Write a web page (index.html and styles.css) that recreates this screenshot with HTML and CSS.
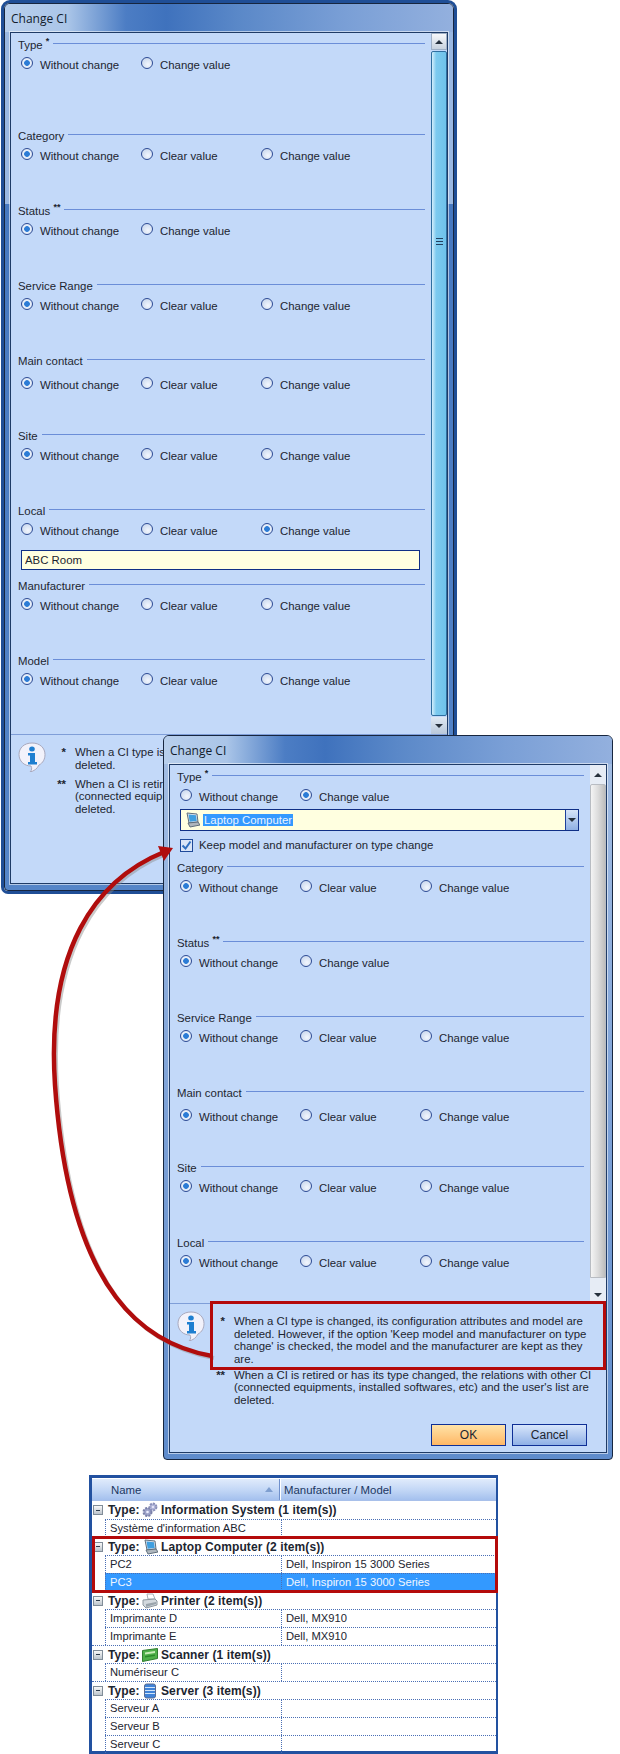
FILE: index.html
```html
<!DOCTYPE html>
<html lang="en">
<head>
  <meta charset="UTF-8" />
  <meta name="viewport" content="width=device-width, initial-scale=1.0" />
  <title>Change CI</title>
  <link rel="stylesheet" href="styles.css">
</head>
<body>
  <svg class="defs" width="0" height="0">
    <symbol id="ico-info" viewBox="0 0 28 30">
      <path d="M14 1C6 1 1 6 1 12.5S6 24 13 24c1 2 1 4-1 6 4-1 7-3 9-7 4-2 6-6 6-10.500C27 6 22 1 14 1z" fill="#f2f2fb" stroke="#a9a9bd"/>
      <ellipse cx="14" cy="7" rx="2.800" ry="2.500" fill="#1f7fd0"/>
      <path d="M10 11h7v9h2v2.500h-9V20h2v-6.500h-2z" fill="#1f7fd0"/>
    </symbol>
    <symbol id="ico-laptop" viewBox="0 0 16 16">
      <path d="M3 1l10 1 1 8-9 1z" fill="#dfe6ee" stroke="#5f6e7c"/>
      <path d="M4.500 2.500l7.500.8.700 5.700-7 .8z" fill="#3f9fe0"/>
      <path d="M4 11l10-1 2 3-10 2z" fill="#aeb6bd" stroke="#5f6e7c"/>
    </symbol>
    <symbol id="ico-gears" viewBox="0 0 16 16">
      <circle cx="5.500" cy="10" r="4" fill="#9da3c9" stroke="#7a80a8" stroke-width="2" stroke-dasharray="2 1.200"/>
      <circle cx="5.500" cy="10" r="1.300" fill="#eef"/>
      <circle cx="11" cy="5" r="3.400" fill="#b2b6d8" stroke="#8a8fb8" stroke-width="2" stroke-dasharray="2 1.100"/>
      <circle cx="11" cy="5" r="1.100" fill="#eef"/>
    </symbol>
    <symbol id="ico-printer" viewBox="0 0 16 16">
      <path d="M5 1l6 0 2 5H6z" fill="#fff" stroke="#a8b0b8"/>
      <path d="M1 7l12-1 2 2v4l-11 3-3-3z" fill="#d3d9de" stroke="#8d979f"/>
      <path d="M4 11l10-2v2l-10 3z" fill="#9aa4ac"/>
    </symbol>
    <symbol id="ico-scanner" viewBox="0 0 16 16">
      <path d="M.5 3.500L15.500 1.500v10l-15 3z" fill="#4fb04a" stroke="#2f7d2f"/>
      <path d="M3 5.500l10-1.500v2L3 7.500z" fill="#c8ecb8"/>
      <path d="M3 9l10-1.500v1.500L3 10.500z" fill="#2c8a2c"/>
    </symbol>
    <symbol id="ico-server" viewBox="0 0 16 16">
      <rect x="2.500" y="1" width="11" height="14" rx="2" fill="#3f82d8" stroke="#5a6a90"/>
      <path d="M3 4.500h10M3 7.500h10M3 10.500h10" stroke="#cfe4fa"/>
    </symbol>
  </svg>

  <section class="win win-first">
    <div class="title">Change CI</div>
    <div class="content">
      <div class="pane">
        <div class="form">
          <div class="sect sect-tall">
            <div class="sect-head"><span>Type <sup>*</sup></span></div>
            <div class="opts">
              <label><input type="radio" name="a1" checked>Without change</label>
              <label><input type="radio" name="a1">Change value</label>
            </div>
          </div>
          <div class="sect">
            <div class="sect-head"><span>Category</span></div>
            <div class="opts">
              <label><input type="radio" name="a2" checked>Without change</label>
              <label><input type="radio" name="a2">Clear value</label>
              <label><input type="radio" name="a2">Change value</label>
            </div>
          </div>
          <div class="sect">
            <div class="sect-head"><span>Status <sup>**</sup></span></div>
            <div class="opts">
              <label><input type="radio" name="a3" checked>Without change</label>
              <label><input type="radio" name="a3">Change value</label>
            </div>
          </div>
          <div class="sect">
            <div class="sect-head"><span>Service Range</span></div>
            <div class="opts">
              <label><input type="radio" name="a4" checked>Without change</label>
              <label><input type="radio" name="a4">Clear value</label>
              <label><input type="radio" name="a4">Change value</label>
            </div>
          </div>
          <div class="sect">
            <div class="sect-head"><span>Main contact</span></div>
            <div class="opts opts-low">
              <label><input type="radio" name="a5" checked>Without change</label>
              <label><input type="radio" name="a5">Clear value</label>
              <label><input type="radio" name="a5">Change value</label>
            </div>
          </div>
          <div class="sect">
            <div class="sect-head"><span>Site</span></div>
            <div class="opts">
              <label><input type="radio" name="a6" checked>Without change</label>
              <label><input type="radio" name="a6">Clear value</label>
              <label><input type="radio" name="a6">Change value</label>
            </div>
          </div>
          <div class="sect">
            <div class="sect-head"><span>Local</span></div>
            <div class="opts">
              <label><input type="radio" name="a7">Without change</label>
              <label><input type="radio" name="a7">Clear value</label>
              <label><input type="radio" name="a7" checked>Change value</label>
            </div>
            <input class="text-field" type="text" value="ABC Room">
          </div>
          <div class="sect">
            <div class="sect-head"><span>Manufacturer</span></div>
            <div class="opts">
              <label><input type="radio" name="a8" checked>Without change</label>
              <label><input type="radio" name="a8">Clear value</label>
              <label><input type="radio" name="a8">Change value</label>
            </div>
          </div>
          <div class="sect">
            <div class="sect-head"><span>Model</span></div>
            <div class="opts">
              <label><input type="radio" name="a9" checked>Without change</label>
              <label><input type="radio" name="a9">Clear value</label>
              <label><input type="radio" name="a9">Change value</label>
            </div>
          </div>
        </div>
        <div class="scroll scroll-blue">
          <div class="scroll-btn"><span class="arrow-up"></span></div>
          <div class="thumb"><span class="grip"></span></div>
          <div class="scroll-btn"><span class="arrow-down"></span></div>
        </div>
      </div>
      <div class="info">
        <div class="info-top">
          <svg class="info-ico"><use href="#ico-info"/></svg>
          <div class="notes">
            <div class="note"><span class="mark">*</span><p>When a CI type is changed, its configuration attributes and model are deleted.</p></div>
            <div class="note"><span class="mark">**</span><p>When a CI is retired or has its type changed, the relations with other CI (connected equipments, installed softwares, etc) and the user's list are deleted.</p></div>
          </div>
        </div>
      </div>
    </div>
  </section>

  <section class="win win-second">
    <div class="title">Change CI</div>
    <div class="content">
      <div class="pane">
        <div class="form">
          <div class="sect sect-tall">
            <div class="sect-head"><span>Type <sup>*</sup></span></div>
            <div class="opts">
              <label><input type="radio" name="b1">Without change</label>
              <label><input type="radio" name="b1" checked>Change value</label>
            </div>
            <div class="combo">
              <svg class="ico"><use href="#ico-laptop"/></svg>
              <span class="combo-value">Laptop Computer</span>
              <span class="combo-btn"><span class="arrow-down"></span></span>
            </div>
            <label class="check-row">
              <span class="check"><svg width="11" height="11" viewBox="0 0 11 11"><path d="M1.500 5.500l3 3 5-7" fill="none" stroke="#2f6fc0" stroke-width="2"/></svg></span>
              Keep model and manufacturer on type change
            </label>
          </div>
          <div class="sect">
            <div class="sect-head"><span>Category</span></div>
            <div class="opts">
              <label><input type="radio" name="b2" checked>Without change</label>
              <label><input type="radio" name="b2">Clear value</label>
              <label><input type="radio" name="b2">Change value</label>
            </div>
          </div>
          <div class="sect">
            <div class="sect-head"><span>Status <sup>**</sup></span></div>
            <div class="opts">
              <label><input type="radio" name="b3" checked>Without change</label>
              <label><input type="radio" name="b3">Change value</label>
            </div>
          </div>
          <div class="sect">
            <div class="sect-head"><span>Service Range</span></div>
            <div class="opts">
              <label><input type="radio" name="b4" checked>Without change</label>
              <label><input type="radio" name="b4">Clear value</label>
              <label><input type="radio" name="b4">Change value</label>
            </div>
          </div>
          <div class="sect">
            <div class="sect-head"><span>Main contact</span></div>
            <div class="opts opts-low">
              <label><input type="radio" name="b5" checked>Without change</label>
              <label><input type="radio" name="b5">Clear value</label>
              <label><input type="radio" name="b5">Change value</label>
            </div>
          </div>
          <div class="sect">
            <div class="sect-head"><span>Site</span></div>
            <div class="opts">
              <label><input type="radio" name="b6" checked>Without change</label>
              <label><input type="radio" name="b6">Clear value</label>
              <label><input type="radio" name="b6">Change value</label>
            </div>
          </div>
          <div class="sect">
            <div class="sect-head"><span>Local</span></div>
            <div class="opts">
              <label><input type="radio" name="b7" checked>Without change</label>
              <label><input type="radio" name="b7">Clear value</label>
              <label><input type="radio" name="b7">Change value</label>
            </div>
          </div>
        </div>
        <div class="scroll scroll-grey">
          <div class="scroll-btn"><span class="arrow-up"></span></div>
          <div class="thumb"></div>
          <div class="scroll-btn"><span class="arrow-down"></span></div>
        </div>
      </div>
      <div class="info">
        <div class="info-top">
          <svg class="info-ico"><use href="#ico-info"/></svg>
          <div class="notes">
            <div class="note"><span class="mark">*</span><p>When a CI type is changed, its configuration attributes and model are deleted. However, if the option 'Keep model and manufacturer on type change' is checked, the model and the manufacturer are kept as they are.</p></div>
            <div class="note"><span class="mark">**</span><p>When a CI is retired or has its type changed, the relations with other CI (connected equipments, installed softwares, etc) and the user's list are deleted.</p></div>
          </div>
        </div>
        <div class="buttons">
          <button class="btn btn-ok">OK</button>
          <button class="btn">Cancel</button>
        </div>
      </div>
    </div>
  </section>

  <section class="list">
    <div class="list-head">
      <div class="col-name">Name<span class="sort"></span></div>
      <div class="col-model">Manufacturer / Model</div>
    </div>
    <div class="group"><span class="toggle"></span><b class="type">Type:</b><svg class="ico"><use href="#ico-gears"/></svg><b>Information System (1 item(s))</b></div>
    <div class="row"><span>Système d'information ABC</span><span></span></div>
    <div class="group"><span class="toggle"></span><b class="type">Type:</b><svg class="ico"><use href="#ico-laptop"/></svg><b>Laptop Computer (2 item(s))</b></div>
    <div class="row"><span>PC2</span><span>Dell, Inspiron 15 3000 Series</span></div>
    <div class="row row-sel"><span>PC3</span><span>Dell, Inspiron 15 3000 Series</span></div>
    <div class="group"><span class="toggle"></span><b class="type">Type:</b><svg class="ico"><use href="#ico-printer"/></svg><b>Printer (2 item(s))</b></div>
    <div class="row"><span>Imprimante D</span><span>Dell, MX910</span></div>
    <div class="row"><span>Imprimante E</span><span>Dell, MX910</span></div>
    <div class="group"><span class="toggle"></span><b class="type">Type:</b><svg class="ico"><use href="#ico-scanner"/></svg><b>Scanner (1 item(s))</b></div>
    <div class="row"><span>Numériseur C</span><span></span></div>
    <div class="group"><span class="toggle"></span><b class="type">Type:</b><svg class="ico"><use href="#ico-server"/></svg><b>Server (3 item(s))</b></div>
    <div class="row"><span>Serveur A</span><span></span></div>
    <div class="row"><span>Serveur B</span><span></span></div>
    <div class="row"><span>Serveur C</span><span></span></div>
  </section>

  <!-- callout curve between the option and the note, drawn over both windows -->
  <svg class="callout" width="620" height="1754" viewBox="0 0 620 1754">
    <path d="M212 1356C150 1345 70 1300 55 1085C46 950 95 880 164 852" fill="none" stroke="#8a8a8a" stroke-width="4" opacity=".45" transform="translate(2 2)"/>
    <path d="M212 1356C150 1345 70 1300 55 1085C46 950 95 880 164 852" fill="none" stroke="#b00d0d" stroke-width="4.500"/>
    <path d="M173 848L158 846L164 861z" fill="#b00d0d"/>
  </svg>
  <div class="red-box red-note"></div>
  <div class="red-box red-rows"></div>
</body>
</html>
```

FILE: styles.css
```css
* {
  box-sizing: border-box;
}
body {
  margin: 0;
  width: 620px;
  height: 1754px;
  position: relative;
  overflow: hidden;
  background: #fff;
  font-family: 'Liberation Sans', Arial, sans-serif;
  font-size: 11.4px;
  color: #1c2530;
}
.defs {
  position: absolute;
}

/* windows */
.win {
  position: absolute;
  width: 450px;
  display: flex;
  flex-direction: column;
  border: 1px solid #17263f;
  border-radius: 6px 6px 4px 4px;
}
.win-first {
  left: 4px;
  top: 3px;
  height: 888px;
  background: linear-gradient(180deg, #9ab8e2 0, #9ab8e2 200px, #4678c0 200px, #5585c8 100%);
  box-shadow: 0 0 0 3px #1f4e96;
}
.win-second {
  left: 163px;
  top: 735px;
  height: 725px;
  background: linear-gradient(180deg, #a5bfe4 0, #7fa3d8 50%, #5f8ccc 100%);
}
.title {
  height: 28px;
  flex: none;
  padding: 6px 0 0 6px;
  border-radius: 5px 5px 0 0;
  font-family: 'Open Sans', sans-serif;
  font-size: 12px;
  line-height: 17px;
  color: #111c2c;
  background: linear-gradient(90deg, #b8cfec 0, #aac5e8 14%, #4c7dc4 27%, #3f72bd 36%, #5a88c8 52%, #7a9fd6 76%, #93b0de 100%);
}
.content {
  flex: 1;
  min-height: 0;
  margin: 0 5px 6px;
  display: flex;
  flex-direction: column;
  border: 1px solid #1f3b66;
  outline: 1px solid rgba(255, 255, 255, .55);
  background: #c3d9f9;
}
.pane {
  flex: 1;
  min-height: 0;
  display: flex;
}
.form {
  flex: 1;
  min-width: 0;
  overflow: hidden;
  padding: 4px 6px 0 7px;
}

/* form sections */
.sect {
  height: 75px;
}
.sect-tall {
  height: 91px;
}
.sect-head {
  height: 14px;
  display: flex;
  align-items: center;
  gap: 4px;
  line-height: 14px;
}
.sect-head span {
  padding-top: 2px;
}
.sect-head::after {
  content: "";
  flex: 1;
  height: 1px;
  margin-top: -1px;
  background: #6b8ed8;
}
sup {
  font-size: 9px;
  line-height: 0;
  font-weight: bold;
}
.opts {
  height: 14px;
  margin-top: 7px;
  padding-left: 3px;
  display: grid;
  grid-template-columns: 120px 120px 120px;
}
.opts-low {
  margin-top: 11px;
}
.opts label {
  display: flex;
  align-items: center;
  gap: 7px;
  line-height: 14px;
}
input[type=radio] {
  appearance: none;
  width: 12px;
  height: 12px;
  margin: -4px 0 0;
  flex: none;
  border: 1px solid #2d4b94;
  border-radius: 50%;
  background: radial-gradient(circle at 60% 65%, #f2f6fd 0, #cfdcf0 70%, #aebcd6 100%);
}
input[type=radio]:checked {
  background: radial-gradient(circle, #2c7cd6 0, #2c7cd6 2.5px, #eaf1fb 3.2px, #cfdcf0 100%);
}
.text-field {
  display: block;
  width: 399px;
  height: 20px;
  margin: 12px 0 0 3px;
  padding: 0 3px;
  border: 1px solid #0f2f86;
  background: #ffffe0;
  font: inherit;
  color: #1c2530;
  outline: none;
}
.combo {
  width: 399px;
  height: 22px;
  margin: 5px 0 0 3px;
  display: flex;
  align-items: center;
  padding-left: 3px;
  border: 1px solid #0f2f86;
  background: #ffffe0;
}
.combo-value {
  margin-left: 3px;
  padding: 0 1px;
  line-height: 12px;
  background: #3399ff;
  color: #eaf3ff;
}
.combo-btn {
  margin-left: auto;
  width: 13px;
  height: 100%;
  display: flex;
  align-items: center;
  justify-content: center;
  border-left: 1px solid #1d3f9a;
  background: linear-gradient(180deg, #d6e4f8, #8fb0e4);
}
.check-row {
  height: 14px;
  margin: 7px 0 0 3px;
  display: flex;
  align-items: center;
  gap: 6px;
}
.check {
  width: 13px;
  height: 13px;
  display: flex;
  align-items: center;
  justify-content: center;
  border: 1px solid #1f4a9a;
  background: #d9e5f7;
}
.ico {
  width: 16px;
  height: 16px;
  flex: none;
}

/* scrollbars */
.scroll {
  width: 16px;
  flex: none;
  display: flex;
  flex-direction: column;
}
.scroll-btn {
  height: 17px;
  flex: none;
  display: flex;
  align-items: center;
  justify-content: center;
}
.arrow-up,
.arrow-down {
  width: 0;
  height: 0;
  border-left: 4px solid transparent;
  border-right: 4px solid transparent;
}
.arrow-up {
  border-bottom: 4px solid #26303c;
}
.arrow-down {
  border-top: 4px solid #26303c;
}
.thumb {
  flex: 1;
  display: flex;
  align-items: center;
  justify-content: center;
}
.scroll-blue .scroll-btn:first-child {
  border: 1px solid #9fb0c6;
  background: linear-gradient(180deg, #f6f8fb, #c8d2de);
}
.scroll-blue .thumb {
  margin: 1px 0;
  border: 1px solid #2f6fa0;
  border-radius: 2px;
  align-items: flex-start;
  padding-top: 186px;
  background: linear-gradient(90deg, #d4eefb 0, #7ccaef 30%, #6fc2ea 100%);
}
.scroll-blue .scroll-btn:last-child {
  background: linear-gradient(180deg, #dfe8f3, #b9c8da);
}
.grip {
  width: 7px;
  height: 7px;
  border-top: 1px solid #24405f;
  border-bottom: 1px solid #24405f;
  background: linear-gradient(180deg, transparent 2px, #24405f 2px, #24405f 3px, transparent 3px);
}
.scroll-grey {
  background: #e6ecf5;
}
.scroll-grey .scroll-btn:first-child {
  height: 19px;
}
.scroll-grey .thumb {
  margin-bottom: 8px;
  border-radius: 2px 2px 0 0;
  border: 1px solid #b8bcc2;
  background: linear-gradient(90deg, #f4f4f4 0, #dcdcdc 50%, #bdbdbd 100%);
}

/* info panel */
.info {
  height: 149px;
  flex: none;
  display: flex;
  flex-direction: column;
  padding-top: 11px;
  border-top: 1px solid #7f9ed8;
}
.info-top {
  display: flex;
  padding-left: 7px;
}
.info-ico {
  width: 28px;
  height: 30px;
  margin: -4px 5px 0 0;
  flex: none;
}
.notes {
  width: 384px;
  flex: none;
}
.note {
  display: flex;
  margin-bottom: 3.5px;
  line-height: 12.5px;
}
.win-first .note {
  margin-bottom: 6.5px;
}
.note p {
  margin: 0 0 0 9px;
  flex: 1;
}
.mark {
  width: 15px;
  flex: none;
  text-align: right;
  font-weight: bold;
}
.buttons {
  margin-top: auto;
  padding: 0 19px 6px 0;
  display: flex;
  justify-content: flex-end;
  gap: 6px;
}
.btn {
  width: 75px;
  height: 22px;
  padding: 0;
  border: 1px solid #0f2f96;
  background: linear-gradient(180deg, #d8e6fb, #8fb0e6);
  font: inherit;
  font-size: 12px;
  color: #1c2530;
}
.btn-ok {
  background: linear-gradient(180deg, #ffe3a8, #ffb765);
}

/* grouped list */
.list {
  position: absolute;
  left: 89px;
  top: 1475px;
  width: 409px;
  height: 279px;
  border: 3px solid #2251a0;
  border-right-width: 2px;
  padding-top: 1px;
  background: #fff;
  font-size: 11.2px;
}
.list-head {
  height: 22px;
  display: flex;
  align-items: center;
  border-bottom: 1px solid #a8c0ea;
  background: linear-gradient(180deg, #e0ebfb 0, #c4d8f6 50%, #a4c0ee 100%);
  color: #1c3762;
  font-size: 11.4px;
}
.col-name {
  width: 188px;
  height: 100%;
  display: flex;
  align-items: center;
  padding-left: 19px;
  border-right: 1px solid #6f90cc;
  box-shadow: 1px 0 0 #fff;
}
.sort {
  margin-left: auto;
  margin-right: 6px;
  width: 0;
  height: 0;
  border-left: 4px solid transparent;
  border-right: 4px solid transparent;
  border-bottom: 5px solid #7f9fd0;
}
.col-model {
  padding-left: 4px;
}
.group {
  height: 18px;
  display: flex;
  align-items: center;
  padding-left: 1px;
  border-top: 1px dotted #4a6fb5;
  font-size: 12px;
}
.list-head + .group {
  border-top: none;
}
.group b {
  white-space: nowrap;
  letter-spacing: .1px;
}
.type {
  width: 34px;
}
.group .ico {
  margin-right: 3px;
}
.toggle {
  width: 10px;
  height: 10px;
  margin-right: 5px;
  flex: none;
  border: 1px solid #808c98;
  background: linear-gradient(180deg, #2f3d4c 0, #2f3d4c 0) center / 4px 1px no-repeat, linear-gradient(180deg, #f8f8f8, #bcc4cc);
}
.row {
  height: 18px;
  margin-left: 13px;
  display: grid;
  grid-template-columns: 175px 1fr;
  align-items: center;
  border-top: 1px dotted #4a6fb5;
  border-left: 1px dotted #4a6fb5;
}
.row span {
  height: 100%;
  padding-left: 4px;
  line-height: 17px;
  white-space: nowrap;
}
.row span:last-child {
  border-left: 1px dotted #4a6fb5;
}
.row-sel {
  background: #3399ff;
  color: #f0f6ff;
}

/* overlays */
.callout {
  position: absolute;
  left: 0;
  top: 0;
  pointer-events: none;
}
.red-box {
  position: absolute;
  border: 3px solid #b40a0a;
}
.red-note {
  left: 210px;
  top: 1301px;
  width: 396px;
  height: 69px;
}
.red-rows {
  left: 92px;
  top: 1536px;
  width: 406px;
  height: 57px;
}
```
